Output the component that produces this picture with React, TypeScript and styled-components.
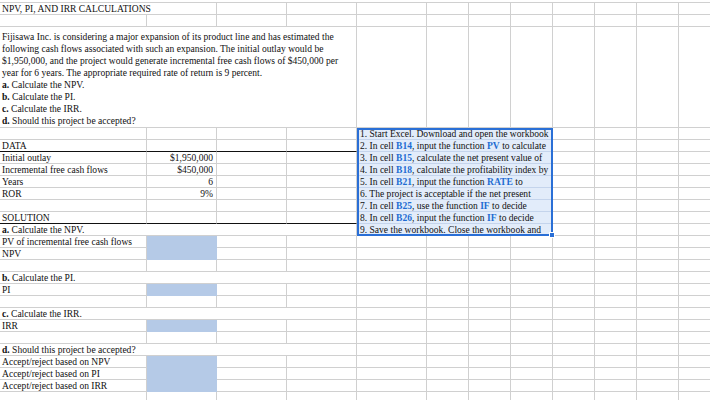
import React from "react";
import styled, { createGlobalStyle } from "styled-components";

const GRID = "#d0d0d0";
const FILL = "#b5cae7";
const BLUE = "#2a6fd6";

const Global = createGlobalStyle`
  html, body { margin: 0; padding: 0; background: #fff; overflow: hidden; }
`;

const Sheet = styled.div`
  display: grid;
  grid-template-columns: 147px 70px 70px 70px 70px repeat(7, 42px);
  grid-template-rows: 12px 12px 101px repeat(23, 12px);
  margin-top: 2px;
  border-top: 1px solid ${GRID};
  width: 710px;
  overflow: hidden;
  font-family: "Liberation Serif", "Times New Roman", serif;
  font-size: 9.55px;
  color: #111;
`;

const Cell = styled.div<{ $span?: number; $align?: "left" | "right"; $fill?: boolean; $rule?: boolean }>`
  grid-column: span ${(p) => p.$span ?? 1};
  box-sizing: border-box;
  border-right: 1px solid ${(p) => (p.$fill ? FILL : GRID)};
  border-bottom: 1px solid ${(p) => (p.$rule ? "#111" : p.$fill ? FILL : GRID)};
  background: ${(p) => (p.$fill ? FILL : "transparent")};
  padding: 0 3px 0 2px;
  line-height: 11px;
  white-space: nowrap;
  text-align: ${(p) => p.$align ?? "left"};
`;

const Paragraph = styled.div`
  grid-column: span 4;
  box-sizing: border-box;
  border-right: 1px solid ${GRID};
  border-bottom: 1px solid ${GRID};
  padding: 0 2px;
  display: flex;
  flex-direction: column;
  justify-content: flex-end;
  line-height: 12px;
  white-space: nowrap;
`;

const Box = styled.div`
  grid-column: 5 / span 4;
  grid-row: 4 / span 9;
  position: relative;
  background: #e2ecfa;
  display: grid;
  grid-template-rows: repeat(9, 12px);
  &::after {
    content: "";
    position: absolute;
    inset: 0;
    border: 2px solid ${BLUE};
    pointer-events: none;
  }
`;

const BoxLine = styled.div`
  box-sizing: border-box;
  border-bottom: 1px solid #c4d4ec;
  padding-left: 3px;
  line-height: 11px;
  white-space: nowrap;
  overflow: hidden;
`;

const Ref = styled.b`
  color: #1f6cd2;
`;

const Handle = styled.span`
  position: absolute;
  right: -2px;
  bottom: -2px;
  width: 4px;
  height: 4px;
  background: ${BLUE};
  border: 1px solid #fff;
  z-index: 2;
`;

const Empty = ({ n }: { n: number }) => (
  <>
    {Array.from({ length: n }).map((_, i) => (
      <Cell key={i} />
    ))}
  </>
);

type Row =
  | { kind: "empty" }
  | { kind: "label"; text: string; value?: string; rule?: boolean }
  | { kind: "head"; letter: string; text: string }
  | { kind: "fill"; text: string };

// rows 4..26
const rows: Row[] = [
  { kind: "empty" },
  { kind: "label", text: "DATA", rule: true },
  { kind: "label", text: "Initial outlay", value: "$1,950,000" },
  { kind: "label", text: "Incremental free cash flows", value: "$450,000" },
  { kind: "label", text: "Years", value: "6" },
  { kind: "label", text: "ROR", value: "9%" },
  { kind: "empty" },
  { kind: "label", text: "SOLUTION", rule: true },
  { kind: "head", letter: "a.", text: " Calculate the NPV." },
  { kind: "fill", text: "PV of incremental free cash flows" },
  { kind: "fill", text: "NPV" },
  { kind: "empty" },
  { kind: "head", letter: "b.", text: " Calculate the PI." },
  { kind: "fill", text: "PI" },
  { kind: "empty" },
  { kind: "head", letter: "c.", text: " Calculate the IRR." },
  { kind: "fill", text: "IRR" },
  { kind: "empty" },
  { kind: "head", letter: "d.", text: " Should this project be accepted?" },
  { kind: "fill", text: "Accept/reject based on NPV" },
  { kind: "fill", text: "Accept/reject based on PI" },
  { kind: "fill", text: "Accept/reject based on IRR" },
  { kind: "empty" },
];

const steps: React.ReactNode[] = [
  <>1. Start Excel. Download and open the workbook</>,
  <>2. In cell <Ref>B14</Ref>, input the function <Ref>PV</Ref> to calculate</>,
  <>3. In cell <Ref>B15</Ref>, calculate the net present value of</>,
  <>4. In cell <Ref>B18</Ref>, calculate the profitability index by</>,
  <>5. In cell <Ref>B21</Ref>, input the function <Ref>RATE</Ref> to</>,
  <>6. The project is acceptable if the net present</>,
  <>7. In cell <Ref>B25</Ref>, use the function <Ref>IF</Ref> to decide</>,
  <>8. In cell <Ref>B26</Ref>, input the function <Ref>IF</Ref> to decide</>,
  <>9. Save the workbook. Close the workbook and</>,
];

const paragraph: React.ReactNode[] = [
  "Fijisawa Inc. is considering a major expansion of its product line and has estimated the",
  "following cash flows associated with such an expansion. The initial outlay would be",
  "$1,950,000, and the project would generate incremental free cash flows of $450,000 per",
  "year for 6 years. The appropriate required rate of return is 9 percent.",
  <><b>a.</b> Calculate the NPV.</>,
  <><b>b.</b> Calculate the PI.</>,
  <><b>c.</b> Calculate the IRR.</>,
  <><b>d.</b> Should this project be accepted?</>,
];

export default function App() {
  return (
    <>
      <Global />
      <Sheet>
        <Box>
          {steps.map((s, i) => (
            <BoxLine key={i}>{s}</BoxLine>
          ))}
          <Handle />
        </Box>
        {/* row 1 */}
        <Cell $span={2}>NPV, PI, AND IRR CALCULATIONS</Cell>
        <Empty n={10} />
        {/* row 2 */}
        <Empty n={12} />
        {/* row 3 */}
        <Paragraph>
          {paragraph.map((l, i) => (
            <div key={i}>{l}</div>
          ))}
        </Paragraph>
        <Empty n={8} />
        {rows.map((r, i) => {
          const rowNo = i + 4;
          const right = rowNo <= 12 ? 4 : 8;
          if (r.kind === "empty")
            return (
              <React.Fragment key={i}>
                <Empty n={4} />
                <Empty n={right} />
              </React.Fragment>
            );
          if (r.kind === "label")
            return (
              <React.Fragment key={i}>
                <Cell $rule={r.rule}>{r.text}</Cell>
                <Cell $rule={r.rule} $align="right">{r.value}</Cell>
                <Cell $rule={r.rule} />
                <Cell $rule={r.rule} />
                <Empty n={right} />
              </React.Fragment>
            );
          if (r.kind === "head")
            return (
              <React.Fragment key={i}>
                <Cell $span={4}>
                  <b>{r.letter}</b>
                  {r.text}
                </Cell>
                <Empty n={right} />
              </React.Fragment>
            );
          return (
            <React.Fragment key={i}>
              <Cell>{r.text}</Cell>
              <Cell $fill />
              <Empty n={2} />
              <Empty n={right} />
            </React.Fragment>
          );
        })}
      </Sheet>
    </>
  );
}
